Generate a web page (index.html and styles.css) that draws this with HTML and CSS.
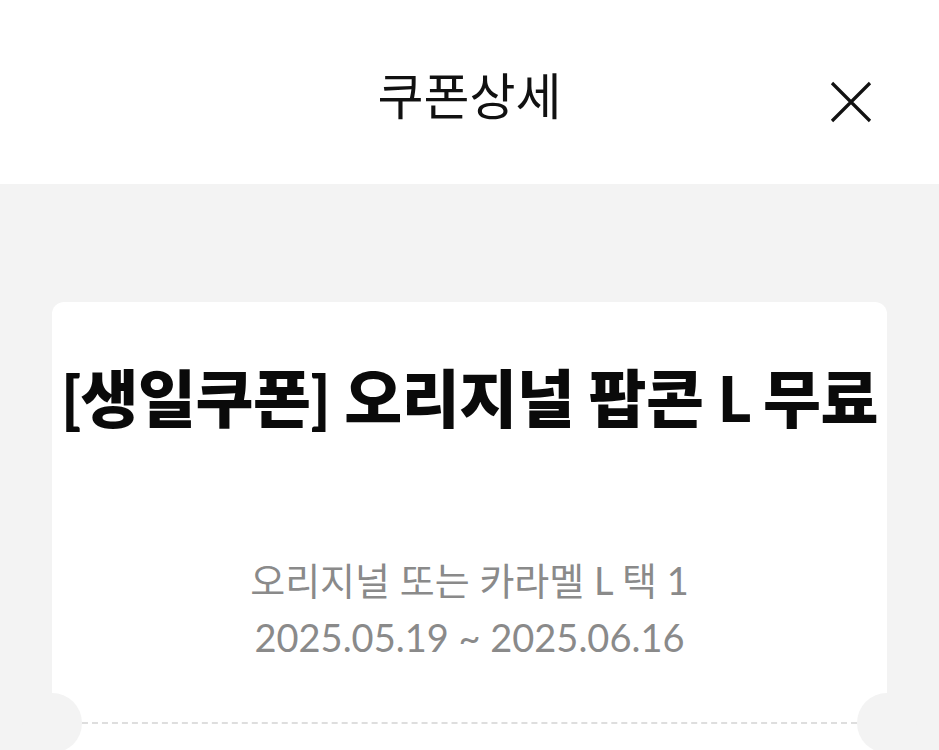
FILE: index.html
```html
<!DOCTYPE html>
<html lang="ko">
<head>
<meta charset="utf-8">
<title>쿠폰상세</title>
<link rel="stylesheet" href="styles.css">
</head>
<body>
<header class="topbar">
  <h1 class="topbar-title">쿠폰상세</h1>
  <button class="close-btn" aria-label="닫기">
    <svg width="42" height="42" viewBox="0 0 42 42" fill="none" stroke="#111" stroke-width="3.2" stroke-linecap="butt">
      <path d="M2 2 L40 40 M40 2 L2 40"/>
    </svg>
  </button>
</header>
<main class="content">
  <section class="coupon">
    <h2 class="coupon-title">[생일쿠폰] 오리지널 팝콘 L 무료</h2>
    <div class="coupon-info">
      <p class="coupon-desc">오리지널 또는 카라멜 L 택 1</p>
      <p class="coupon-date">2025.05.19 ~ 2025.06.16</p>
    </div>
    <div class="coupon-divider"></div>
    <div class="coupon-bottom"></div>
  </section>
</main>
</body>
</html>
```
FILE: styles.css
```css
* { box-sizing: border-box; }
html, body { margin: 0; padding: 0; }
body {
  background: #f3f3f3;
  font-family: Lato, "Noto Sans CJK KR", sans-serif;
  color: #111;
  overflow: hidden;
  height: 750px;
}
.topbar {
  position: relative;
  height: 184px;
  background: #fff;
  display: flex;
  align-items: center;
  justify-content: center;
}
.topbar-title {
  margin: 0;
  font-family: "Noto Sans CJK KR", sans-serif;
  font-weight: 400;
  font-size: 50px;
  line-height: 1;
  color: #111;
  padding-top: 2px;
}
.close-btn {
  position: absolute;
  right: 67px;
  top: 81px;
  width: 42px;
  height: 42px;
  padding: 0;
  border: 0;
  background: none;
  display: block;
}
.close-btn svg { display: block; }
.content {
  padding: 118px 52px 0;
}
.coupon {
  background: #fff;
  border-radius: 12px;
  display: flex;
  flex-direction: column;
  align-items: center;
  padding-top: 59px;
}
.coupon-title {
  margin: 0;
  font-size: 63px;
  font-weight: 900;
  line-height: 74px;
  letter-spacing: -0.5px;
  color: #0a0a0a;
  white-space: nowrap;
}
.coupon-info {
  margin-top: 117px;
  text-align: center;
  color: #8a8a8a;
  font-size: 38px;
  line-height: 57px;
}
.coupon-info p { margin: 0; white-space: nowrap; }
.coupon-desc { letter-spacing: 0; }
.coupon-divider {
  position: relative;
  align-self: stretch;
  margin-top: 56px;
  height: 0;
  border-top: 2px dashed #dedede;
  margin-left: 30px;
  margin-right: 30px;
}
.coupon-divider::before,
.coupon-divider::after {
  content: "";
  position: absolute;
  top: -31px;
  width: 60px;
  height: 60px;
  border-radius: 50%;
  background: #f3f3f3;
}
.coupon-divider::before { left: -60px; }
.coupon-divider::after { right: -60px; }
.coupon-bottom { height: 120px; }
```
